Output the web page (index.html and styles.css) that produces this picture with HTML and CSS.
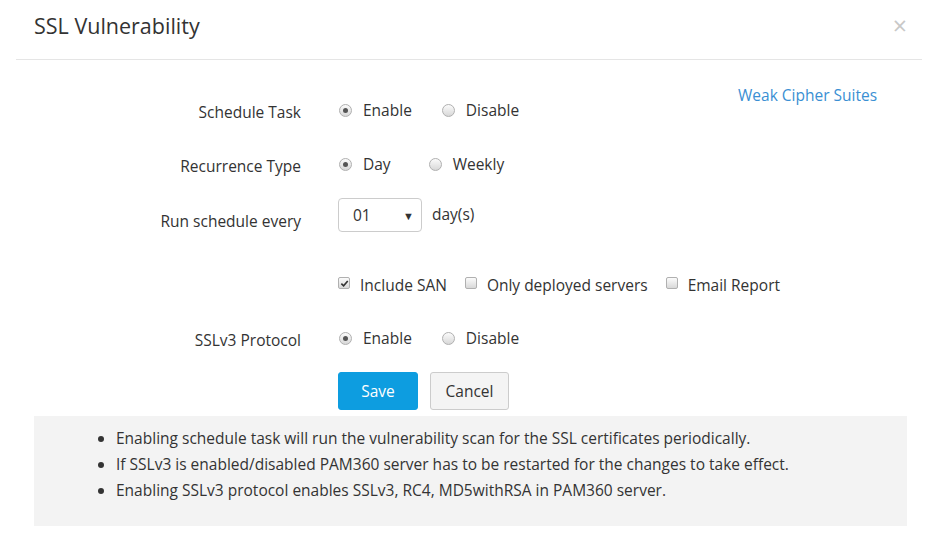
FILE: index.html
```html
<!DOCTYPE html>
<html>
<head>
<meta charset="utf-8">
<link rel="stylesheet" href="styles.css">
</head>
<body>
<div class="dialog">
  <div class="header">
    <h1 class="title">SSL Vulnerability</h1>
    <span class="close">&times;</span>
  </div>
  <div class="content">
    <a class="cipher-link" href="#">Weak Cipher Suites</a>
    <div class="row row-schedule">
      <div class="label">Schedule Task</div>
      <div class="controls">
        <label class="opt"><span class="radio checked"></span>Enable</label>
        <label class="opt"><span class="radio"></span>Disable</label>
      </div>
    </div>
    <div class="row row-recur">
      <div class="label">Recurrence Type</div>
      <div class="controls">
        <label class="opt"><span class="radio checked"></span>Day</label>
        <label class="opt"><span class="radio"></span>Weekly</label>
      </div>
    </div>
    <div class="row row-every">
      <div class="label label-low">Run schedule every</div>
      <div class="controls">
        <div class="select"><span>01</span><span class="arrow">&#9660;</span></div>
        <span class="unit">day(s)</span>
      </div>
    </div>
    <div class="row row-checks">
      <div class="label"></div>
      <div class="controls">
        <label class="chk"><span class="checkbox checked"><svg viewBox="0 0 10 10" width="9" height="9"><path d="M1.5 5.2 L4 7.6 L8.6 2.2" fill="none" stroke="#333" stroke-width="1.8"/></svg></span>Include SAN</label>
        <label class="chk"><span class="checkbox"></span>Only deployed servers</label>
        <label class="chk"><span class="checkbox"></span>Email Report</label>
      </div>
    </div>
    <div class="row row-ssl">
      <div class="label">SSLv3 Protocol</div>
      <div class="controls">
        <label class="opt"><span class="radio checked"></span>Enable</label>
        <label class="opt"><span class="radio"></span>Disable</label>
      </div>
    </div>
    <div class="row row-buttons">
      <div class="label"></div>
      <div class="controls">
        <button class="btn btn-primary">Save</button>
        <button class="btn btn-default">Cancel</button>
      </div>
    </div>
    <div class="notes">
      <ul>
        <li>Enabling schedule task will run the vulnerability scan for the SSL certificates periodically.</li>
        <li>If SSLv3 is enabled/disabled PAM360 server has to be restarted for the changes to take effect.</li>
        <li>Enabling SSLv3 protocol enables SSLv3, RC4, MD5withRSA in PAM360 server.</li>
      </ul>
    </div>
  </div>
</div>
</body>
</html>
```

FILE: styles.css
```css
* { box-sizing: border-box; }
html, body { margin: 0; padding: 0; background: #fff; }
body {
  font-family: "Open Sans", "Liberation Sans", sans-serif;
  font-size: 15.5px;
  color: #333;
  width: 938px;
  height: 536px;
  overflow: hidden;
}
.dialog { position: relative; width: 938px; }
.header {
  margin: 0 16px 0 16px;
  height: 60px;
  border-bottom: 1px solid #e5e5e5;
  display: flex;
  align-items: center;
  justify-content: space-between;
  padding: 0 15px 0 18px;
}
.title {
  margin: 0;
  font-size: 21.5px;
  font-weight: 400;
  color: #333;
  position: relative;
  top: -4px;
}
.close {
  font-size: 25px;
  color: #c8c8c8;
  line-height: 1;
  position: relative;
  top: -4px;
}
.content { position: relative; padding-top: 33px; }
.cipher-link {
  position: absolute;
  left: 738px;
  top: 24px;
  color: #3a8fd3;
  text-decoration: none;
}
.row { display: flex; align-items: center; }
.label {
  width: 301px;
  text-align: right;
  padding-top: 4px;
  flex: none;
}
.label-low { padding-top: 11px; }
.controls {
  display: flex;
  align-items: center;
  margin-left: 37px;
}
.row-schedule { height: 34px; }
.row-recur { height: 34px; margin-top: 20px; }
.row-every { height: 34px; margin-top: 17px; }
.row-checks { height: 30px; margin-top: 38px; }
.row-ssl { height: 30px; margin-top: 23px; }
.row-buttons { margin-top: 19px; }
.opt, .chk {
  display: inline-flex;
  align-items: center;
  white-space: nowrap;
}
.opt { margin-right: 29px; }
.row-recur .opt { margin-right: 37px; }
.radio {
  width: 13px;
  height: 13px;
  border-radius: 50%;
  border: 1px solid #b0b0b0;
  background: linear-gradient(#fbfbfb, #d8d8d8);
  margin-left: 1px;
  margin-right: 11px;
  position: relative;
  flex: none;
}
.radio.checked::after {
  content: "";
  position: absolute;
  left: 3px;
  top: 3px;
  width: 5px;
  height: 5px;
  border-radius: 50%;
  background: #555;
}
.checkbox {
  width: 12px;
  height: 12px;
  border-radius: 2px;
  border: 1px solid #b0b0b0;
  background: linear-gradient(#fbfbfb, #d8d8d8);
  margin-right: 10px;
  display: inline-flex;
  align-items: center;
  justify-content: center;
  flex: none;
  position: relative;
  top: -2px;
}
.chk { margin-right: 18px; }
.select {
  width: 84px;
  height: 34px;
  border: 1px solid #ccc;
  border-radius: 4px;
  display: flex;
  align-items: center;
  justify-content: space-between;
  padding: 0 7px 0 14px;
}
.select .arrow { font-size: 11px; color: #333; }
.unit { margin-left: 10px; position: relative; top: -1px; }
.btn {
  font-family: "Open Sans", "Liberation Sans", sans-serif;
  font-size: 15.5px;
  height: 38px;
  border-radius: 3px;
  cursor: pointer;
}
.btn-primary {
  width: 80px;
  background: #0d9de0;
  border: 1px solid #0d9de0;
  color: #fff;
  margin-right: 12px;
}
.btn-default {
  width: 79px;
  background: #f4f4f4;
  border: 1px solid #ccc;
  color: #333;
}
.notes {
  margin: 6px 31px 0 34px;
  background: #f3f3f3;
  height: 110px;
  padding-top: 9px;
}
.notes ul {
  margin: 0;
  padding-left: 82px;
  line-height: 26px;
}
```
